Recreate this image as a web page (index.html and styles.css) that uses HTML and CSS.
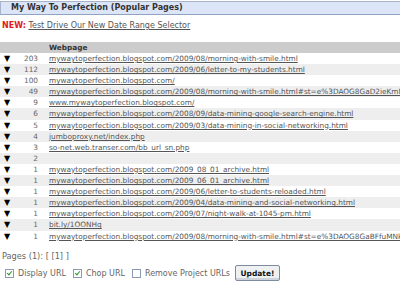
FILE: index.html
```html
<!DOCTYPE html>
<html>
<head>
<meta charset="utf-8">
<link rel="stylesheet" href="styles.css">
</head>
<body>
<div class="page">
  <div class="titlebar">My Way To Perfection (Popular Pages)</div>
  <div class="news"><span class="new">NEW:</span> <a class="link" href="#">Test Drive Our New Date Range Selector</a></div>
  <table class="grid">
    <thead>
      <tr class="head"><th class="arr"></th><th class="cnt"></th><th class="url">Webpage</th></tr>
    </thead>
    <tbody>
      <tr><td class="arr">▼</td><td class="cnt">203</td><td class="url"><a href="#">mywaytoperfection.blogspot.com/2009/08/morning-with-smile.html</a></td></tr>
      <tr class="alt"><td class="arr">▼</td><td class="cnt">112</td><td class="url"><a href="#">mywaytoperfection.blogspot.com/2009/06/letter-to-my-students.html</a></td></tr>
      <tr><td class="arr">▼</td><td class="cnt">100</td><td class="url"><a href="#">mywaytoperfection.blogspot.com/</a></td></tr>
      <tr class="alt"><td class="arr">▼</td><td class="cnt">49</td><td class="url"><a href="#">mywaytoperfection.blogspot.com/2009/08/morning-with-smile.html#st=e%3DAOG8GaD2ieKmN</a></td></tr>
      <tr><td class="arr">▼</td><td class="cnt">9</td><td class="url"><a href="#">www.mywaytoperfection.blogspot.com/</a></td></tr>
      <tr class="alt"><td class="arr">▼</td><td class="cnt">6</td><td class="url"><a href="#">mywaytoperfection.blogspot.com/2008/09/data-mining-google-search-engine.html</a></td></tr>
      <tr><td class="arr">▼</td><td class="cnt">5</td><td class="url"><a href="#">mywaytoperfection.blogspot.com/2009/03/data-mining-in-social-networking.html</a></td></tr>
      <tr class="alt"><td class="arr">▼</td><td class="cnt">4</td><td class="url"><a href="#">jumboproxy.net/index.php</a></td></tr>
      <tr><td class="arr">▼</td><td class="cnt">3</td><td class="url"><a href="#">so-net.web.transer.com/bb_url_sn.php</a></td></tr>
      <tr class="alt"><td class="arr">▼</td><td class="cnt">2</td><td class="url"></td></tr>
      <tr><td class="arr">▼</td><td class="cnt">1</td><td class="url"><a href="#">mywaytoperfection.blogspot.com/2009_08_01_archive.html</a></td></tr>
      <tr class="alt"><td class="arr">▼</td><td class="cnt">1</td><td class="url"><a href="#">mywaytoperfection.blogspot.com/2009_06_01_archive.html</a></td></tr>
      <tr><td class="arr">▼</td><td class="cnt">1</td><td class="url"><a href="#">mywaytoperfection.blogspot.com/2009/06/letter-to-students-reloaded.html</a></td></tr>
      <tr class="alt"><td class="arr">▼</td><td class="cnt">1</td><td class="url"><a href="#">mywaytoperfection.blogspot.com/2009/04/data-mining-and-social-networking.html</a></td></tr>
      <tr><td class="arr">▼</td><td class="cnt">1</td><td class="url"><a href="#">mywaytoperfection.blogspot.com/2009/07/night-walk-at-1045-pm.html</a></td></tr>
      <tr class="alt"><td class="arr">▼</td><td class="cnt">1</td><td class="url"><a href="#">bit.ly/1OONHq</a></td></tr>
      <tr><td class="arr">▼</td><td class="cnt">1</td><td class="url"><a href="#">mywaytoperfection.blogspot.com/2009/08/morning-with-smile.html#st=e%3DAOG8GaBFfuMNk</a></td></tr>
    </tbody>
  </table>
  <div class="pages">Pages (1): [ [1] ]</div>
  <div class="opts">
    <span class="box on"></span><span class="lbl">Display URL</span>
    <span class="box on"></span><span class="lbl">Chop URL</span>
    <span class="box"></span><span class="lbl">Remove Project URLs</span>
    <button class="btn">Update!</button>
  </div>
</div>
</body>
</html>
```
FILE: styles.css
```css
html, body { margin: 0; padding: 0; background: #fff; }
body { font-family: "DejaVu Sans", Verdana, sans-serif; font-size: 8px; color: #555; width: 400px; height: 284px; overflow: hidden; }
.page { width: 400px; }
.titlebar {
  margin-top: 1px;
  height: 12px;
  line-height: 12px;
  background: #dbe5f7;
  border-top: 1px solid #a7b5cc;
  border-bottom: 1px solid #8fa3c2;
  border-left: 1px solid #a7b5cc;
  padding-left: 10px;
  font-weight: bold;
  font-size: 8px;
  color: #333;
  white-space: nowrap;
}
.news { margin-top: 6px; padding-left: 2px; height: 10px; line-height: 10px; white-space: nowrap; font-size: 8px; }
.new { color: #e0201a; font-weight: bold; }
.link { color: #555; text-decoration: underline; }
.grid { margin-top: 11px; border-collapse: collapse; width: 400px; table-layout: fixed; font-size: 7.35px; }
.grid th, .grid td { padding: 0; white-space: nowrap; overflow: hidden; height: 11.1px; line-height: 11.1px; }
.head th { background: #cccccc; height: 11px; line-height: 11px; font-weight: bold; color: #333; text-align: left; }
.arr { width: 14px; text-align: center; color: #000; font-size: 8px; }
.cnt { width: 24px; text-align: right; color: #666; }
.url { padding-left: 11px !important; }
.grid td a { color: #555; text-decoration: underline; }
.alt td { background: #eeeeee; }
.pages { margin-top: 9px; padding-left: 2px; height: 10px; line-height: 10px; color: #666; font-size: 8.2px; }
.opts { margin-top: 4px; padding-left: 5px; display: flex; align-items: center; height: 17px; color: #666; white-space: nowrap; font-size: 8px; }
.box { width: 7px; height: 7px; border: 1px solid #8a9ab0; background: #fff; position: relative; flex: none; }
.box.on::after {
  content: "";
  position: absolute;
  left: 2px; top: 0px;
  width: 2px; height: 4px;
  border-right: 1.2px solid #2a9a2a;
  border-bottom: 1.2px solid #2a9a2a;
  transform: rotate(40deg);
}
.lbl { margin-left: 4px; margin-right: 7px; }
.btn {
  margin-left: -2px;
  font-family: "DejaVu Sans", Verdana, sans-serif;
  font-size: 7.5px;
  font-weight: bold;
  color: #111;
  background: #eef0f2;
  border: 1px solid #7d8aa0;
  border-radius: 2px;
  height: 16px;
  width: 45px;
  padding: 0;
  box-shadow: inset 0 -2px 0 #cfd4dc;
}
```
